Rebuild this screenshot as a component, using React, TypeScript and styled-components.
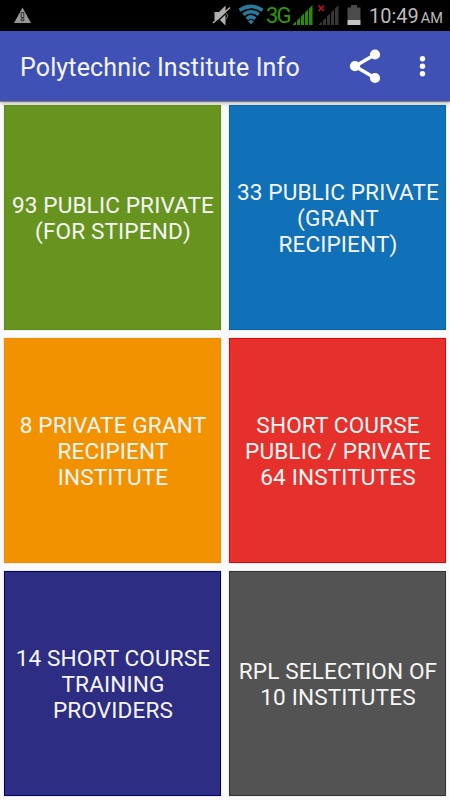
import React from 'react';
import styled, { createGlobalStyle } from 'styled-components';

const GlobalStyle = createGlobalStyle`
  * { box-sizing: border-box; }
  body { margin: 0; background: #fafafa; font-family: Roboto, sans-serif; }
`;

const Screen = styled.main`
  width: 450px;
  height: 800px;
  display: flex;
  flex-direction: column;
  overflow: hidden;
  background: #fafafa;
`;

const StatusBar = styled.header`
  height: 31px;
  flex: none;
  display: flex;
  align-items: flex-start;
  background: #000;
`;

const StatusIcon = styled.svg<{ $gap: number }>`
  display: block;
  flex: none;
  height: 31px;
  margin-left: ${(p) => p.$gap}px;
`;

const Network = styled.span`
  width: 24px;
  margin-left: 2px;
  font-size: 22px;
  line-height: 31px;
  letter-spacing: -1.8px;
  color: #2f9a08;
  white-space: nowrap;
`;

const Clock = styled.div`
  display: flex;
  align-items: baseline;
  margin-left: 8px;
  font-size: 20px;
  line-height: 33px;
  color: #bcbcbc;
  white-space: nowrap;
`;

const Meridiem = styled.span`
  margin-left: 2px;
  font-size: 14.5px;
`;

const AppBar = styled.nav`
  height: 70px;
  flex: none;
  display: flex;
  align-items: center;
  padding-left: 20px;
  background: #3f51b5;
  box-shadow: 0 1px 1px rgba(0, 0, 0, 0.35), 0 2px 4px rgba(0, 0, 0, 0.28);
`;

const Title = styled.h1`
  flex: 1;
  margin: 0;
  padding-top: 4px;
  font-size: 25px;
  font-weight: 400;
  line-height: 30px;
  letter-spacing: 0.14px;
  color: #f4f5fb;
  white-space: nowrap;
`;

const IconButton = styled.button<{ $width: number }>`
  width: ${(p) => p.$width}px;
  height: 70px;
  padding: 0;
  border: 0;
  background: none;
  svg { display: block; }
`;

const Grid = styled.section`
  display: grid;
  grid-template-columns: repeat(2, 217px);
  grid-auto-rows: 225px;
  gap: 8px;
  padding: 4px;
`;

const Tile = styled.button<{ $fill: string; $edge: string }>`
  display: flex;
  align-items: center;
  justify-content: center;
  padding: 3px 0 0 1px;
  border: 1px solid ${(p) => p.$edge};
  background: ${(p) => p.$fill};
  box-shadow: 0 0 1px rgba(0, 0, 0, 0.25);
  color: #f6f6f6;
  font-family: Roboto, sans-serif;
  font-size: 22.6px;
  line-height: 26px;
  letter-spacing: 0.12px;
  text-align: center;
  text-transform: uppercase;
  white-space: pre;
`;

const tiles = [
  { label: '93 Public Private\n(For Stipend)', fill: '#67941f', edge: '#5e8e14' },
  { label: '33 Public Private\n(Grant\nRecipient)', fill: '#1070b8', edge: '#0564b0' },
  { label: '8 Private Grant\nRecipient\nInstitute', fill: '#f39200', edge: '#f18b00' },
  { label: 'Short Course\nPublic / Private\n64 Institutes', fill: '#e6302b', edge: '#de0808' },
  { label: '14 Short Course\nTraining\nProviders', fill: '#2d2e83', edge: '#00006f' },
  { label: 'RPL Selection of\n10 Institutes', fill: '#535353', edge: '#343434' },
];

const SignalBars = ({ color }: { color: string }) => (
  <path
    fill={color}
    d="M0 25V24L3 21.5V25ZM4 25V20.5L7 17.5V25ZM8 25V16.5L11 13.5V25ZM12 25V12.5L15 9.5V25ZM16 25V8.5L19.5 5V25Z"
  />
);

export default function App() {
  return (
    <Screen>
      <GlobalStyle />
      <StatusBar>
        <StatusIcon $gap={14} width="17" viewBox="0 0 17 31">
          <path fill="#969696" d="M8.5 7.5L17 23H0Z" />
          <path fill="none" stroke="#333" strokeWidth="1" d="M7.2 12.5H9.8V17.5H7.2ZM7.2 18.8H9.8V20.8H7.2Z" />
        </StatusIcon>
        <StatusIcon $gap={181} width="20" viewBox="0 0 20 31">
          <path fill="#b0b0b0" d="M2.5 12H7L13.5 5.5V25.5L8 20H2.5Z" />
          <path stroke="#000" strokeWidth="1.4" d="M2.5 24L18.5 9" />
          <path stroke="#b0b0b0" strokeWidth="1.6" d="M1 23L18 7.5" />
          <path fill="none" stroke="#777" d="M14 13L16 16L14 19" />
        </StatusIcon>
        <StatusIcon $gap={6} width="26" viewBox="0 0 26 31">
          <g fill="none" stroke="#287b9f" strokeWidth="3.6">
            <path d="M1.5 10.3Q13 2.5 24.5 10.3" />
            <path d="M5.3 14.6Q13 8.9 20.7 14.6" />
            <path d="M8.8 18.8Q13 15 17.2 18.8" />
          </g>
          <path fill="#287b9f" d="M10.2 21.2Q13 18.8 15.8 21.2L13 24.5Z" />
        </StatusIcon>
        <Network>3G</Network>
        <StatusIcon $gap={3} width="20" viewBox="0 0 20 31">
          <SignalBars color="#278c06" />
        </StatusIcon>
        <StatusIcon $gap={5} width="21" viewBox="0 0 21 31">
          <g transform="translate(1 0)"><SignalBars color="#363636" /></g>
          <path stroke="#b81414" strokeWidth="1.7" d="M0.5 5.5L6 11M6 5.5L0.5 11" />
        </StatusIcon>
        <StatusIcon $gap={8} width="14" viewBox="0 0 14 31">
          <path fill="#4b4b4b" d="M4 5H10V7.5H13.5V20H0.5V7.5H4Z" />
          <path fill="#c4c4c4" d="M0.5 20H13.5V25H0.5Z" />
        </StatusIcon>
        <Clock>10:49<Meridiem>AM</Meridiem></Clock>
      </StatusBar>
      <AppBar>
        <Title>Polytechnic Institute Info</Title>
        <IconButton $width={60} aria-label="Share">
          <svg width="60" height="70" viewBox="0 0 60 70">
            <path fill="none" stroke="#fff" strokeWidth="3.4" d="M40 23.5L20 35.2L40 47" />
            <g fill="#fff">
              <circle cx="40" cy="23.5" r="5.1" />
              <circle cx="20" cy="35.2" r="5.1" />
              <circle cx="40" cy="47" r="5.1" />
            </g>
          </svg>
        </IconButton>
        <IconButton $width={55} aria-label="More options">
          <svg width="55" height="70" viewBox="0 0 55 70" fill="#fff">
            <circle cx="27.5" cy="27.8" r="2.7" />
            <circle cx="27.5" cy="35.2" r="2.7" />
            <circle cx="27.5" cy="42.7" r="2.7" />
          </svg>
        </IconButton>
      </AppBar>
      <Grid>
        {tiles.map((t) => (
          <Tile key={t.label} $fill={t.fill} $edge={t.edge}>{t.label}</Tile>
        ))}
      </Grid>
    </Screen>
  );
}
